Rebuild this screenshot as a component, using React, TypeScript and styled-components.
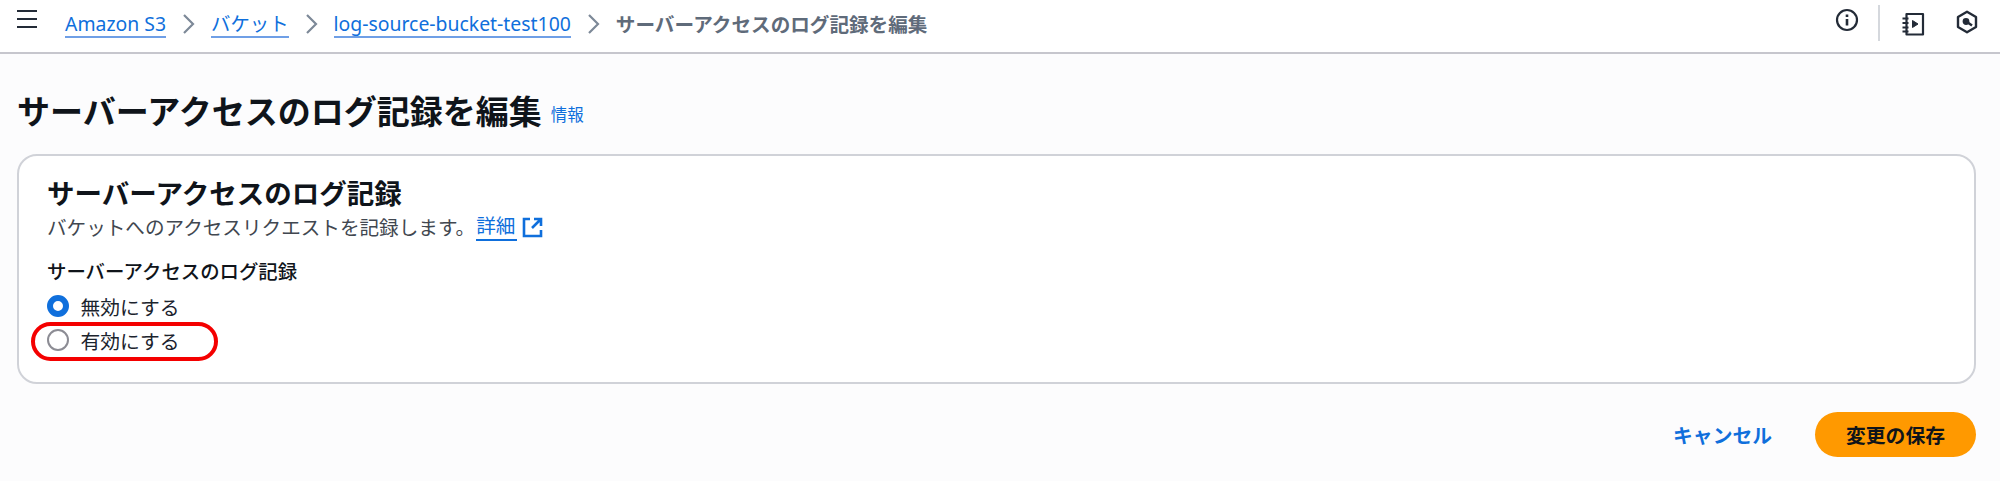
import React from "react";
import styled, { createGlobalStyle } from "styled-components";

const GlobalStyle = createGlobalStyle`
    html, body {
        margin: 0;
        padding: 0;
        background: #fcfcfd;
        font-family: "Noto Sans", "Noto Sans CJK JP", sans-serif;
        color: #0f141a;
    }
`

const Page = styled.div`
    width: 2000px;
    height: 481px;
    overflow: hidden;
`

const Header = styled.header`
    height: 52px;
    background: #fff;
    border-bottom: 2px solid #c6c6cd;
    display: flex;
    align-items: center;
    padding-left: 17px;
    padding-right: 22px;
`

const MenuButton = styled.div`
    width: 20px;
    height: 20px;
    margin-top: -14px;
    margin-right: 28px;
    color: #232b37;
`

const Crumbs = styled.nav`
    display: flex;
    align-items: center;
    flex: 1;
    font-size: 19.4px;
    margin-top: -4px;
`

const CrumbLink = styled.a`
    color: #0f6fdc;
    line-height: 25px;
    border-bottom: 2px solid #6f9fe6;
`

const CrumbCurrent = styled.span`
    color: #5f6b7a;
    font-weight: 700;
    font-size: 19.6px;
    line-height: 27px;
    white-space: nowrap;
`

const Chevron = styled.svg`
    width: 14px;
    height: 22px;
    margin: 0 15px 0 16px;
    color: #7d8998;
`

const Tools = styled.div`
    display: flex;
    align-items: center;
    color: #232b37;
`

const InfoIcon = styled.svg`
    width: 24px;
    height: 24px;
    margin-top: -12px;
`

const ToolDivider = styled.div`
    width: 2px;
    height: 36px;
    background: #d5d8dd;
    margin: -6px 21px 0 19px;
`

const NotebookIcon = styled.svg`
    width: 24px;
    height: 24px;
    margin-top: -4px;
`

const HexIcon = styled.svg`
    width: 22px;
    height: 24px;
    margin-left: 31px;
    margin-top: -8px;
`

const Main = styled.main`
    padding: 36px 24px 0 17px;
`

const TitleRow = styled.div`
    display: flex;
    align-items: baseline;
    gap: 9px;
    height: 64px;
`

const Title = styled.h1`
    margin: 0;
    font-size: 33px;
    line-height: 44px;
    font-weight: 700;
    color: #0f141a;
`

const InfoLink = styled.a`
    color: #0f6fdc;
    font-size: 16.5px;
    position: relative;
    top: -3px;
`

const Card = styled.section`
    height: 230px;
    box-sizing: border-box;
    background: #fff;
    border: 2px solid #d0d2d8;
    border-radius: 20px;
    padding: 19px 28px;
`

const CardTitle = styled.h2`
    margin: 0;
    font-size: 27.5px;
    line-height: 38px;
    font-weight: 700;
`

const CardDesc = styled.p`
    margin: 0 0 17px;
    font-size: 19.6px;
    line-height: 27px;
    color: #414750;
    display: flex;
    align-items: center;
`

const DetailLink = styled.a`
    color: #0f6fdc;
    border-bottom: 2px solid #0f6fdc;
    line-height: 26px;
    padding-right: 2px;
    margin-left: 1px;
    margin-right: 5px;
`

const ExternalIcon = styled.svg`
    width: 21px;
    height: 21px;
    color: #0f6fdc;
`

const FieldLabel = styled.div`
    font-size: 19.4px;
    line-height: 27px;
    font-weight: 500;
    margin-bottom: 4px;
`

const RadioRow = styled.label`
    position: relative;
    display: flex;
    align-items: center;
    gap: 11.5px;
    height: 34px;
    font-size: 19.8px;
    color: #1b232d;
`

const Radio = styled.input.attrs({ type: "radio", name: "logging" })`
    appearance: none;
    margin: 0;
    width: 22px;
    height: 22px;
    border-radius: 50%;
    box-sizing: border-box;
    border: 2px solid #8c8c94;
    background: #fff;

    &:checked {
        border: 6.5px solid #0f6fdc;
    }
`

const Highlight = styled.span`
    position: absolute;
    left: -16px;
    top: -1px;
    width: 187px;
    height: 39px;
    box-sizing: border-box;
    border: 4px solid #f40000;
    border-radius: 20px;
    pointer-events: none;
`

const Actions = styled.div`
    display: flex;
    justify-content: flex-end;
    align-items: center;
    gap: 43px;
    margin-top: 28px;
`

const CancelButton = styled.button`
    background: none;
    border: none;
    padding: 0;
    color: #0f6fdc;
    font: 700 19.8px "Noto Sans", "Noto Sans CJK JP", sans-serif;
`

const SaveButton = styled.button`
    width: 161px;
    height: 45px;
    border: none;
    border-radius: 23px;
    background: #ff9900;
    color: #0f141a;
    font: 700 19.8px "Noto Sans", "Noto Sans CJK JP", sans-serif;
`

const ChevronRight = () => (
    <Chevron viewBox="0 0 14 22" fill="none" stroke="currentColor" strokeWidth="2.2">
        <path d="M2 2l9 9-9 9" />
    </Chevron>
)

const App: React.FC = () => {
    return (
        <Page>
            <GlobalStyle />
            <Header>
                <MenuButton>
                    <svg width="20" height="20" viewBox="0 0 20 20" stroke="currentColor" strokeWidth="2.2">
                        <path d="M0 2h20M0 10h20M0 18h20" />
                    </svg>
                </MenuButton>
                <Crumbs>
                    <CrumbLink>Amazon S3</CrumbLink>
                    <ChevronRight />
                    <CrumbLink>バケット</CrumbLink>
                    <ChevronRight />
                    <CrumbLink>log-source-bucket-test100</CrumbLink>
                    <ChevronRight />
                    <CrumbCurrent>サーバーアクセスのログ記録を編集</CrumbCurrent>
                </Crumbs>
                <Tools>
                    <InfoIcon viewBox="0 0 24 24" fill="none" stroke="currentColor" strokeWidth="2.2">
                        <circle cx="12" cy="12" r="10" />
                        <path d="M12 11v6.5M12 6.5v2.4" strokeWidth="2.6" />
                    </InfoIcon>
                    <ToolDivider />
                    <NotebookIcon viewBox="0 0 24 24" fill="none" stroke="currentColor" strokeWidth="2.2">
                        <path d="M5.5 2h16.5v20.5H5.5z" strokeLinejoin="round" />
                        <path d="M1.5 6.5h6M1.5 11h6M1.5 15.5h6M1.5 19.5h6" strokeWidth="1.8" />
                        <path d="M11.5 8.5l5.5 3.5-5.5 3.5z" fill="currentColor" strokeWidth="1" />
                    </NotebookIcon>
                    <HexIcon viewBox="0 0 22 24" fill="none" stroke="currentColor" strokeWidth="2.4">
                        <path d="M11 1.8l9 5.2v10l-9 5.2-9-5.2V7z" strokeLinejoin="round" />
                        <circle cx="10" cy="11.5" r="2.2" fill="currentColor" />
                        <path d="M11 12l5 3.5" />
                    </HexIcon>
                </Tools>
            </Header>
            <Main>
                <TitleRow>
                    <Title>サーバーアクセスのログ記録を編集</Title>
                    <InfoLink>情報</InfoLink>
                </TitleRow>
                <Card>
                    <CardTitle>サーバーアクセスのログ記録</CardTitle>
                    <CardDesc>
                        バケットへのアクセスリクエストを記録します。
                        <DetailLink>詳細</DetailLink>
                        <ExternalIcon viewBox="0 0 21 21" fill="none" stroke="currentColor" strokeWidth="2.6">
                            <path d="M8 2H2v17h17v-6" />
                            <path d="M12 2h7v7M19 2l-9 9" />
                        </ExternalIcon>
                    </CardDesc>
                    <FieldLabel>サーバーアクセスのログ記録</FieldLabel>
                    <RadioRow>
                        <Radio defaultChecked />
                        無効にする
                    </RadioRow>
                    <RadioRow>
                        <Radio />
                        有効にする
                        <Highlight />
                    </RadioRow>
                </Card>
                <Actions>
                    <CancelButton>キャンセル</CancelButton>
                    <SaveButton>変更の保存</SaveButton>
                </Actions>
            </Main>
        </Page>
    )
}

export default App
